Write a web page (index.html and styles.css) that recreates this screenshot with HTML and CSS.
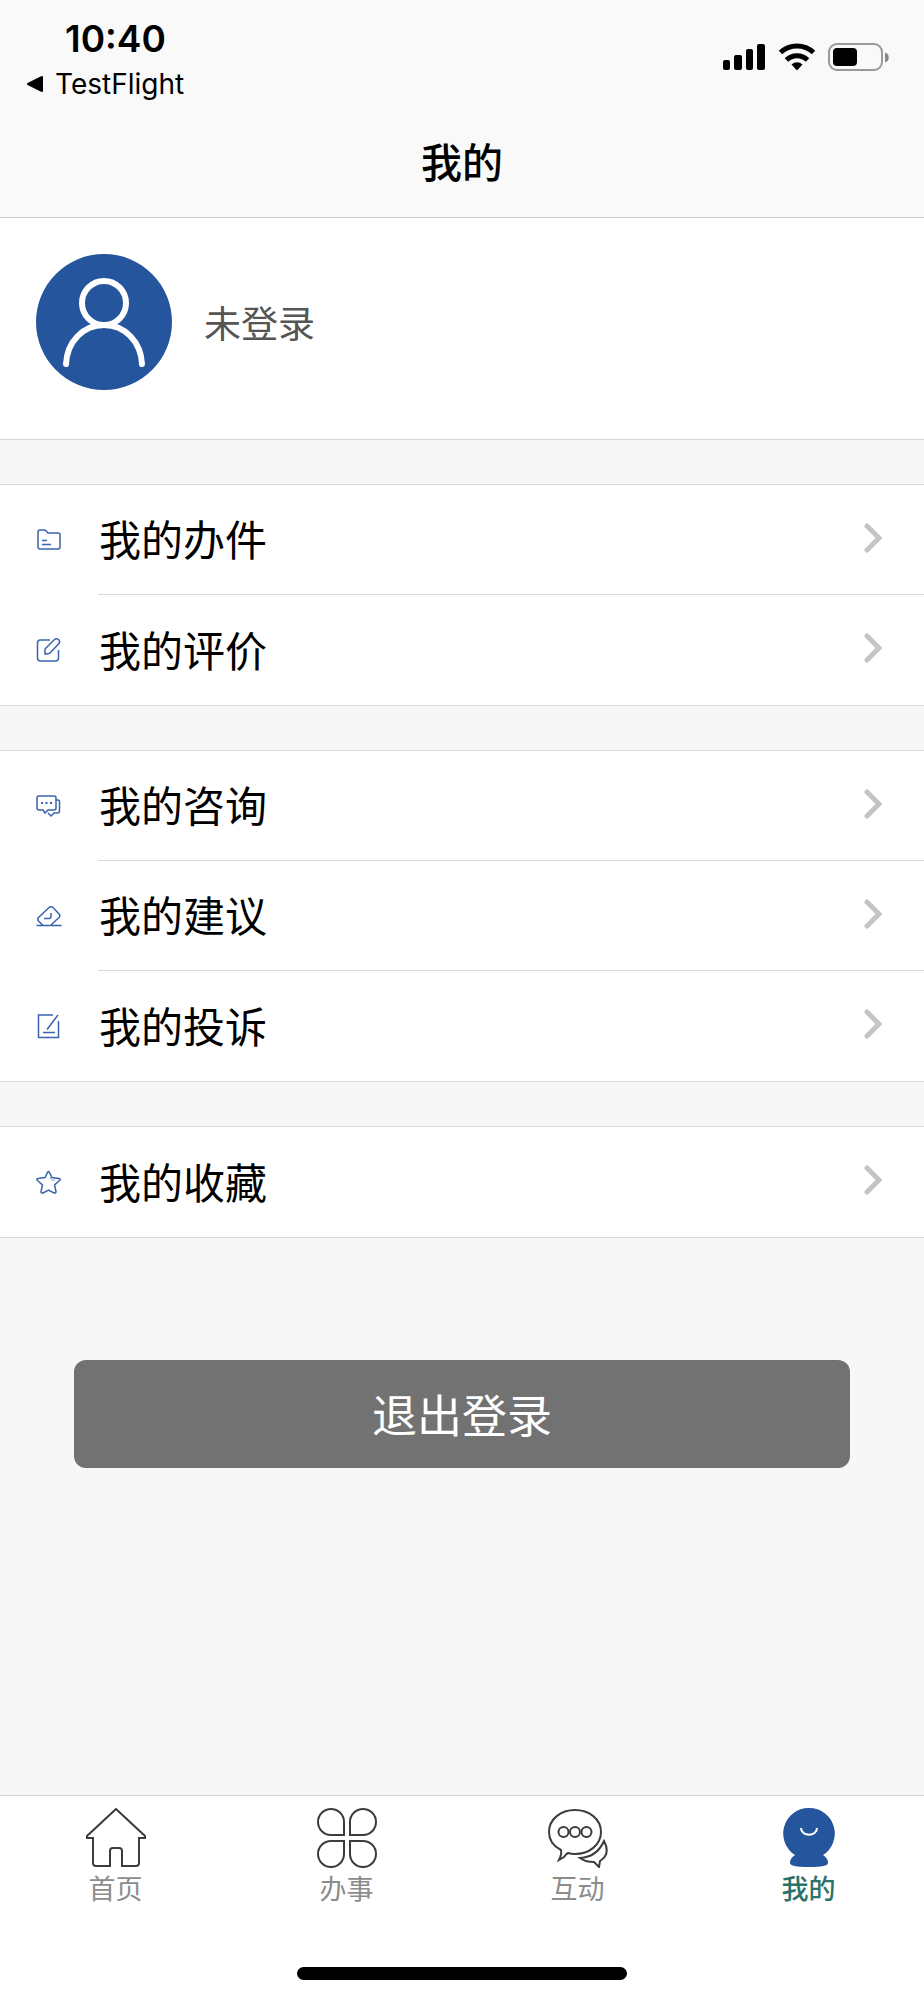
FILE: index.html
```html
<!DOCTYPE html>
<html lang="zh-CN">
<head>
    <meta charset="UTF-8">
    <meta name="viewport" content="width=device-width, initial-scale=1.0">
    <title>我的</title>
    <link rel="stylesheet" href="styles.css">
</head>
<body>
    <header class="header">
        <div class="status-bar">
            <div class="status-left">
                <div class="time">10:40</div>
                <a class="back-app" href="#">
                    <svg width="18" height="18" viewBox="0 0 18 18"><path d="M16 2v14L2 9z" fill="#000" stroke="#000" stroke-width="2" stroke-linejoin="round"/></svg>
                    <span>TestFlight</span>
                </a>
            </div>
            <div class="status-icons">
                <svg width="44" height="28" viewBox="0 0 44 28">
                    <rect x="1" y="17" width="7" height="10" rx="2"/>
                    <rect x="12" y="12" width="8" height="15" rx="2"/>
                    <rect x="24" y="6" width="7" height="21" rx="2"/>
                    <rect x="35" y="1" width="8" height="26" rx="2"/>
                </svg>
                <svg width="38" height="28" viewBox="0 0 38 28">
                    <path d="M2.500 9.500a24 24 0 0 1 33 0" fill="none" stroke="#000" stroke-width="5"/>
                    <path d="M8.500 17a15 15 0 0 1 21 0" fill="none" stroke="#000" stroke-width="5"/>
                    <path d="M13.500 21.500a8 8 0 0 1 11 0L19 27.500z"/>
                </svg>
                <svg width="62" height="28" viewBox="0 0 62 28">
                    <rect x="1" y="1" width="53" height="26" rx="8" fill="none" stroke="#999" stroke-width="2"/>
                    <rect x="5" y="5" width="24" height="18" rx="4"/>
                    <path d="M57 9.500c5 1 5 9 0 10z" fill="#888"/>
                </svg>
            </div>
        </div>
        <h1 class="title">我的</h1>
    </header>

    <main class="content">
        <section class="profile">
            <svg class="avatar" viewBox="0 0 136 136">
                <circle cx="68" cy="68" r="68" fill="#25559d"/>
                <g fill="none" stroke="#fff" stroke-width="6" stroke-linecap="round">
                    <circle cx="68" cy="49" r="22"/>
                    <path d="M30 110c1-22 17-39 38-39s37 17 38 39"/>
                </g>
            </svg>
            <span class="profile-name">未登录</span>
        </section>

        <nav class="group">
            <a class="row" href="#">
                <svg class="row-icon" viewBox="0 0 26 26"><path d="M2 20V5q0-2 2-2h4q2 0 3 2l1 1h10q2 0 2 2v12q0 2-2 2H4q-2 0-2-2zM6 13.500h5M6 17.500h9"/></svg>
                <span class="row-label">我的办件<svg class="chevron" viewBox="0 0 18 30"><path d="M3 3l12 12L3 27"/></svg></span>
            </a>
            <a class="row" href="#">
                <svg class="row-icon" viewBox="0 0 26 26"><path d="M14 3H4.500Q1.500 3 1.500 6v15q0 3 3 3h15q3 0 3-3v-8M9 17v-5l9.500-9.500q2-1.500 4 0 2 2 .500 4L14 16q-1 1-5 1z"/></svg>
                <span class="row-label">我的评价<svg class="chevron" viewBox="0 0 18 30"><path d="M3 3l12 12L3 27"/></svg></span>
            </a>
        </nav>

        <nav class="group">
            <a class="row" href="#">
                <svg class="row-icon" viewBox="0 0 26 26"><path d="M3 3h15q2 0 2 2v10q0 2-2 2h-6l-3 3-2-3H3q-2 0-2-2V5q0-2 2-2zM20 7h2q1.500 0 1.500 2v9q0 2-2 2H18l-3 3-3-3"/><path d="M5 10h2m2.500 0h2m2.500 0h2" stroke-width="2"/></svg>
                <span class="row-label">我的咨询<svg class="chevron" viewBox="0 0 18 30"><path d="M3 3l12 12L3 27"/></svg></span>
            </a>
            <a class="row" href="#">
                <svg class="row-icon" viewBox="0 0 26 26"><path d="M.500 22.500h25M6.500 22l-4-4q-1.500-2 0-3.500L13 4.500q2-1.500 4 0l6.500 7q1 1.500 0 2.500L15 22M8 15.500h5q2 0 2-2V10"/></svg>
                <span class="row-label">我的建议<svg class="chevron" viewBox="0 0 18 30"><path d="M3 3l12 12L3 27"/></svg></span>
            </a>
            <a class="row" href="#">
                <svg class="row-icon" viewBox="0 0 26 26"><path d="M17 2H2.500v22.500h20V8M22 2L11 16.500M7 19.500h12"/></svg>
                <span class="row-label">我的投诉<svg class="chevron" viewBox="0 0 18 30"><path d="M3 3l12 12L3 27"/></svg></span>
            </a>
        </nav>

        <nav class="group">
            <a class="row" href="#">
                <svg class="row-icon" viewBox="0 0 26 26"><path d="M11.500 3.500q1-2 2 0l2.500 5 7 1q2 .500.500 2l-5 4.500 1.500 6.500q0 2-2 1.500L12.500 21 7 24q-2 .500-2-1.500L6.500 16l-5-4.500q-1.500-1.500.500-2l7-1z"/><path d="M14 8q1 4 5 3" stroke-width="1" opacity=".6"/></svg>
                <span class="row-label">我的收藏<svg class="chevron" viewBox="0 0 18 30"><path d="M3 3l12 12L3 27"/></svg></span>
            </a>
        </nav>

        <button type="button" class="logout">退出登录</button>
    </main>

    <footer class="footer">
        <nav class="tabs">
            <a class="tab" href="#">
                <svg class="tab-icon" viewBox="0 0 60 60"><path d="M30 1L1 28v2h6v25q0 3 3 3h14V43q0-3 3-3h6q3 0 3 3v15h14q3 0 3-3V30h6v-2z"/></svg>
                <span>首页</span>
            </a>
            <a class="tab" href="#">
                <svg class="tab-icon" viewBox="0 0 60 60"><path d="M27 27H14A13 13 0 1 1 27 14zM33 27h13A13 13 0 1 0 33 14zM27 33H14A13 13 0 1 0 27 46zM33 33h13A13 13 0 1 1 33 46z"/></svg>
                <span>办事</span>
            </a>
            <a class="tab" href="#">
                <svg class="tab-icon" viewBox="0 0 60 60">
                    <path d="M13 42C5 38 1 31 1 24 1 11 13 2 27 2s26 9 26 22-12 22-26 22q-4 0-7-1-2 1-4 4l-5 3q3-6 2-10z"/>
                    <path d="M56 33q7 13-4 20l-1 6-5-5q-9 0-14-4 17-1 24-17z"/>
                    <circle cx="15.500" cy="24" r="5"/><circle cx="27" cy="24" r="5"/><circle cx="38.500" cy="24" r="5"/>
                </svg>
                <span>互动</span>
            </a>
            <a class="tab active" href="#">
                <svg class="tab-icon" viewBox="0 0 60 60"><path d="M30 0a25.500 25.500 0 0 1 14 47q5 3 5 8 0 4-19 4t-19-4q0-5 5-8A25.500 25.500 0 0 1 30 0z" fill="#25559d" stroke="none"/><path d="M22 20c0 9 16 9 16 0" stroke="#fff"/></svg>
                <span>我的</span>
            </a>
        </nav>
        <div class="home-indicator"></div>
    </footer>
</body>
</html>
```
FILE: styles.css
```css
* {
    box-sizing: border-box;
    margin: 0;
    padding: 0;
}

body {
    display: flex;
    flex-direction: column;
    min-height: 100vh;
    font-family: "Noto Sans CJK SC", sans-serif;
    background-color: #f7f7f7;
    color: #000;
}

a {
    color: inherit;
    text-decoration: none;
}

svg {
    flex-shrink: 0;
}

.header {
    background-color: #f9f9f9;
    border-bottom: 1px solid #c8c8c8;
    padding-bottom: 27px;
}

.status-bar {
    display: flex;
    justify-content: space-between;
    align-items: flex-start;
    padding: 16px 34px 0 26px;
    font-family: Inter, sans-serif;
}

.time {
    padding-left: 39px;
    font-size: 37px;
    font-weight: 600;
    line-height: 46px;
}

.back-app {
    display: flex;
    align-items: center;
    gap: 11px;
    font-size: 28px;
    line-height: 44px;
}

.status-icons {
    display: flex;
    gap: 12px;
    padding-top: 27px;
}

.title {
    padding-top: 24px;
    font-size: 41px;
    font-weight: 500;
    line-height: 60px;
    text-align: center;
}

.content {
    flex: 1;
}

.profile {
    display: flex;
    align-items: center;
    gap: 32px;
    height: 222px;
    padding: 0 36px 14px;
    background-color: #fff;
    border-bottom: 1px solid #d8d8d8;
}

.avatar {
    width: 136px;
    height: 136px;
}

.profile-name {
    font-size: 37px;
    color: #555;
}

.group {
    margin-top: 44px;
    background-color: #fff;
    border-top: 1px solid #d8d8d8;
    border-bottom: 1px solid #d8d8d8;
}

.row {
    display: flex;
    align-items: center;
    gap: 36px;
    height: 110px;
    padding-left: 36px;
}

.row-icon {
    width: 26px;
    height: 26px;
    fill: none;
    stroke: #3a62ad;
    stroke-width: 1.5;
}

.row-label {
    display: flex;
    flex: 1;
    align-items: center;
    justify-content: space-between;
    height: 100%;
    padding: 0 42px 4px 1px;
    font-size: 42px;
    border-bottom: 1px solid #d8d8d8;
}

.row:last-child .row-label {
    border-bottom: none;
}

.chevron {
    width: 18px;
    height: 30px;
    fill: none;
    stroke: #c4c4c4;
    stroke-width: 5;
    stroke-linecap: round;
}

.logout {
    display: block;
    width: 84%;
    height: 108px;
    margin: 122px auto 0;
    padding-bottom: 2px;
    border: none;
    border-radius: 12px;
    background-color: #727272;
    color: #fff;
    font-family: inherit;
    font-size: 45px;
    cursor: pointer;
}

.footer {
    background-color: #fff;
    border-top: 1px solid #d0d0d0;
    padding: 12px 0 20px;
}

.tabs {
    display: flex;
}

.tab {
    display: flex;
    flex: 1;
    flex-direction: column;
    align-items: center;
    font-size: 27px;
    line-height: 40px;
    color: #8c8c8c;
}

.tab.active {
    color: #2b7268;
    font-weight: 500;
}

.tab-icon {
    width: 60px;
    height: 60px;
    fill: none;
    stroke: #3c3c3c;
    stroke-width: 2;
}

.home-indicator {
    width: 330px;
    height: 13px;
    margin: 59px auto 0;
    border-radius: 8px;
    background-color: #000;
}
```
